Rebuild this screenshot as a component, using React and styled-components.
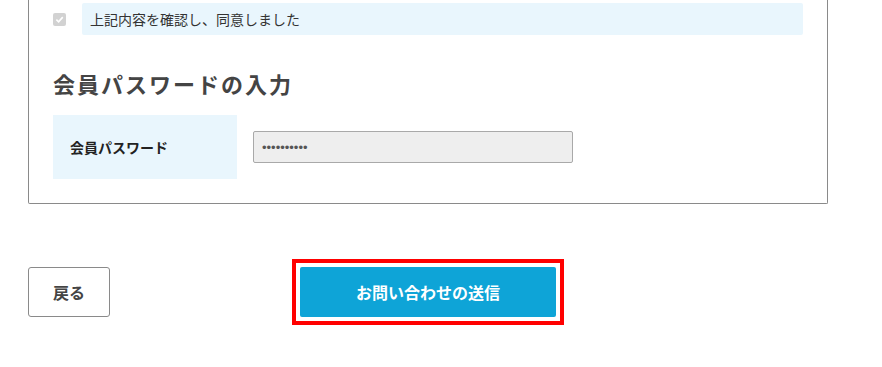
import styled, { createGlobalStyle } from 'styled-components';

const GlobalStyle = createGlobalStyle`
	body {
		margin: 0;
		background: #fff;
		font-family: "Noto Sans CJK JP", "Noto Sans", sans-serif;
		color: #333;
	}
`;

function App() {
	return (
		<Page>
			<GlobalStyle />
			<Panel>
				<AgreeRow>
					<CheckMark>
						<svg width="9" height="9" viewBox="0 0 10 10">
							<path d="M1.5 5.2 L4 7.6 L8.6 2.4" fill="none" stroke="#fff" strokeWidth="1.8" />
						</svg>
					</CheckMark>
					<AgreeBox>上記内容を確認し、同意しました</AgreeBox>
				</AgreeRow>
				<Heading>会員パスワードの入力</Heading>
				<FieldRow>
					<FieldLabel>会員パスワード</FieldLabel>
					<FieldValue>
						<PasswordInput type="password" value="aaaaaaaaaa" readOnly />
					</FieldValue>
				</FieldRow>
			</Panel>
			<Actions>
				<BackButton>戻る</BackButton>
				<Highlight>
					<SubmitButton>お問い合わせの送信</SubmitButton>
				</Highlight>
			</Actions>
		</Page>
	);
}

export default App;

const Page = styled.div`
	width: 800px;
	margin-left: 28px;
`;

const Panel = styled.div`
	border: 1px solid #8a8a8a;
	border-top: none;
	border-radius: 0 0 2px 2px;
	padding: 3px 24px 24px 24px;
`;

const AgreeRow = styled.div`
	display: flex;
	align-items: center;
	gap: 16px;
`;

const CheckMark = styled.span`
	display: flex;
	align-items: center;
	justify-content: center;
	width: 13px;
	height: 13px;
	border-radius: 2px;
	background: #d2d2d2;
	flex-shrink: 0;
`;

const AgreeBox = styled.div`
	flex: 1;
	height: 32px;
	display: flex;
	align-items: center;
	padding-left: 8px;
	background: #e9f6fd;
	border-radius: 2px;
	font-size: 14px;
	color: #333;
`;

const Heading = styled.h2`
	margin: 32px 0 15px 0;
	font-size: 22px;
	line-height: 33px;
	font-weight: 700;
	letter-spacing: 2px;
	color: #444;
`;

const FieldRow = styled.div`
	display: flex;
	align-items: center;
	gap: 16px;
`;

const FieldLabel = styled.div`
	width: 184px;
	height: 64px;
	display: flex;
	align-items: center;
	padding-left: 17px;
	box-sizing: border-box;
	background: #e9f6fd;
	font-size: 14px;
	font-weight: 700;
	color: #222;
`;

const FieldValue = styled.div`
	display: flex;
	align-items: center;
`;

const PasswordInput = styled.input`
	width: 320px;
	height: 32px;
	box-sizing: border-box;
	border: 1px solid #a9a9a9;
	border-radius: 2px;
	background: #eee;
	padding: 0 8px;
	font-family: "Liberation Sans", sans-serif;
	font-size: 13px;
	color: #555;
	outline: none;
`;

const Actions = styled.div`
	display: grid;
	grid-template-columns: 1fr auto 1fr;
	align-items: center;
	margin-top: 55px;
`;

const BackButton = styled.button`
	justify-self: start;
	width: 82px;
	height: 50px;
	border: 1px solid #8a8a8a;
	border-radius: 3px;
	background: #fff;
	font-family: "Noto Sans CJK JP", sans-serif;
	font-size: 16px;
	font-weight: 700;
	color: #444;
	cursor: pointer;
`;

const Highlight = styled.div`
	border: 4px solid #ff0000;
	padding: 4px;
	display: flex;
`;

const SubmitButton = styled.button`
	width: 256px;
	height: 50px;
	border: none;
	border-radius: 2px;
	background: #0ea4d7;
	font-family: "Noto Sans CJK JP", sans-serif;
	font-size: 16px;
	font-weight: 700;
	color: #fff;
	cursor: pointer;
`;
